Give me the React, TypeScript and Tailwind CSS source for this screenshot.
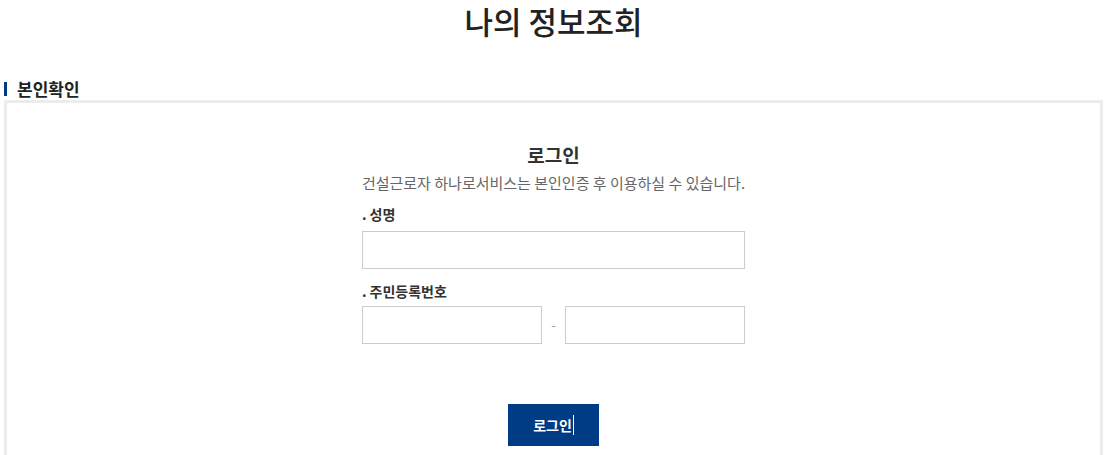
const FONT = '"Noto Sans CJK KR", "Noto Sans", sans-serif'

export default function App() {
  return (
    <div className="bg-white text-[#222]" style={{ fontFamily: FONT }}>
      <h1 className="h-[42px] pt-[1px] text-center text-[31px] font-medium leading-[40px] text-[#222]">
        나의 정보조회
      </h1>

      <div className="mt-[37px] px-[4px]">
        <div className="flex h-[19px] items-center gap-[10px]">
          <span className="h-[14px] w-[3px] bg-[#003b85]" />
          <h2 className="text-[17px] font-bold leading-[19px] text-[#222]">본인확인</h2>
        </div>

        <div className="mt-[2px] h-[400px] border-[3px] border-[#ececec] bg-white">
          <div className="mx-auto w-[383px] pt-[38px]">
            <h3 className="text-center text-[19px] font-bold leading-[28px] text-[#333]">로그인</h3>
            <p className="-mx-4 mt-[3px] whitespace-nowrap text-center text-[15px] leading-[22px] text-[#666]">
              건설근로자 하나로서비스는 본인인증 후 이용하실 수 있습니다.
            </p>

            <label className="mt-[10px] block text-[14px] font-bold leading-[20px] text-[#333]">
              <span className="mr-[3px]">.</span>성명
            </label>
            <input className="mt-[7px] block h-[38px] w-[383px] border border-[#cccccc] bg-white px-2 outline-none" />

            <label className="mt-[12px] block text-[14px] font-bold leading-[20px] text-[#333]">
              <span className="mr-[3px]">.</span>주민등록번호
            </label>
            <div className="mt-[5px] flex items-center">
              <input className="block h-[38px] w-[180px] border border-[#cccccc] bg-white px-2 outline-none" />
              <span className="flex-1 text-center text-[13px] text-[#999]">-</span>
              <input className="block h-[38px] w-[180px] border border-[#cccccc] bg-white px-2 outline-none" />
            </div>

            <div className="mt-[60px] flex justify-center">
              <button className="flex h-[42px] w-[91px] items-center justify-center bg-[#003b85] text-[14px] font-bold text-white">
                로그인
                <span className="ml-[1px] h-[20px] w-[1px] bg-white" />
              </button>
            </div>
          </div>
        </div>
      </div>
    </div>
  )
}
